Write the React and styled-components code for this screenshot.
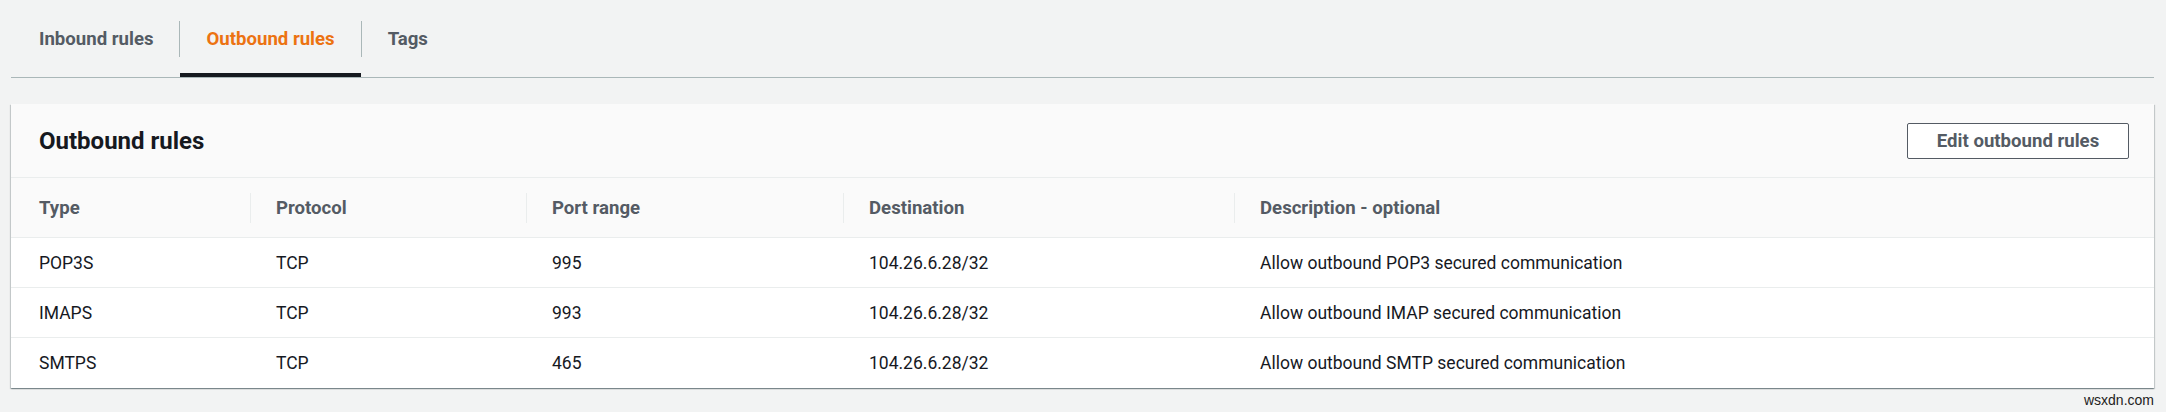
import styled, { createGlobalStyle } from "styled-components";

const GlobalStyle = createGlobalStyle`
  html, body {
    margin: 0;
    padding: 0;
    background-color: #f2f3f3;
  }
  body {
    font-family: Roboto, "Liberation Sans", sans-serif;
    color: #16191f;
  }
`;

const Page = styled.div`
  width: 2166px;
  height: 412px;
  padding: 0 12px 0 11px;
  box-sizing: border-box;
  display: flex;
  flex-direction: column;
`;

const TabBar = styled.div`
  display: flex;
  align-items: center;
  height: 77px;
  padding-left: 2px;
  border-bottom: 1px solid #aab7b8;
`;

const Tab = styled.div`
  position: relative;
  height: 100%;
  display: flex;
  align-items: center;
  padding: 0 26px;
  font-size: 18.6px;
  font-weight: 700;
  color: ${(props) => (props.active ? "#ec7211" : "#545b64")};

  &::after {
    content: "";
    display: ${(props) => (props.active ? "block" : "none")};
    position: absolute;
    left: 0;
    right: 0;
    bottom: 0;
    height: 4px;
    background-color: #16191f;
  }
`;

const TabDivider = styled.span`
  width: 1px;
  height: 36px;
  background-color: #aab7b8;
`;

const Card = styled.div`
  margin-top: 26px;
  background-color: #ffffff;
  box-shadow: 0 1px 1px 0 rgba(0, 28, 36, 0.3),
    1px 1px 1px 0 rgba(0, 28, 36, 0.15),
    -1px 1px 1px 0 rgba(0, 28, 36, 0.15);
`;

const CardHeader = styled.div`
  height: 73px;
  display: flex;
  align-items: center;
  justify-content: space-between;
  padding: 0 25px 0 28px;
  background-color: #fafafa;
  border-bottom: 1px solid #eaeded;
`;

const CardTitle = styled.h2`
  margin: 0;
  font-size: 24px;
  font-weight: 700;
  color: #16191f;
`;

const Button = styled.button`
  width: 222px;
  height: 36px;
  border: 1px solid #545b64;
  border-radius: 2px;
  background-color: #ffffff;
  font-family: Roboto, "Liberation Sans", sans-serif;
  font-size: 18.6px;
  font-weight: 700;
  color: #545b64;
  cursor: pointer;
`;

const Row = styled.div`
  display: grid;
  grid-template-columns: 239px 276px 317px 391px 1fr;
  height: ${(props) => (props.head ? "60px" : "50px")};
  background-color: ${(props) => (props.head ? "#fafafa" : "#ffffff")};
  border-bottom: ${(props) => (props.last ? "none" : "1px solid #eaeded")};
  box-sizing: border-box;
`;

const Cell = styled.div`
  position: relative;
  display: flex;
  align-items: center;
  padding-left: ${(props) => (props.first ? "28px" : "26px")};
  font-size: ${(props) => (props.head ? "18.6px" : "17.5px")};
  font-weight: ${(props) => (props.head ? 700 : 400)};
  color: ${(props) => (props.head ? "#545b64" : "#16191f")};
  white-space: nowrap;

  &::before {
    content: "";
    display: ${(props) => (props.head && !props.first ? "block" : "none")};
    position: absolute;
    left: 0;
    top: 15px;
    height: 30px;
    width: 1px;
    background-color: #eaeded;
  }
`;

const Footer = styled.div`
  flex: 1;
  display: flex;
  align-items: center;
  justify-content: flex-end;
  font-family: "Liberation Sans", Arial, sans-serif;
  font-size: 14px;
  color: #222222;
`;

const columns = ["Type", "Protocol", "Port range", "Destination", "Description - optional"];

const rules = [
  ["POP3S", "TCP", "995", "104.26.6.28/32", "Allow outbound POP3 secured communication"],
  ["IMAPS", "TCP", "993", "104.26.6.28/32", "Allow outbound IMAP secured communication"],
  ["SMTPS", "TCP", "465", "104.26.6.28/32", "Allow outbound SMTP secured communication"],
];

const App = () => {
  return (
    <>
      <GlobalStyle />
      <Page>
        <TabBar>
          <Tab>Inbound rules</Tab>
          <TabDivider />
          <Tab active>Outbound rules</Tab>
          <TabDivider />
          <Tab>Tags</Tab>
        </TabBar>
        <Card>
          <CardHeader>
            <CardTitle>Outbound rules</CardTitle>
            <Button>Edit outbound rules</Button>
          </CardHeader>
          <Row head>
            {columns.map((col, i) => (
              <Cell head first={i === 0} key={col}>
                {col}
              </Cell>
            ))}
          </Row>
          {rules.map((rule, r) => (
            <Row key={rule[0]} last={r === rules.length - 1}>
              {rule.map((value, i) => (
                <Cell first={i === 0} key={i}>
                  {value}
                </Cell>
              ))}
            </Row>
          ))}
        </Card>
        <Footer>wsxdn.com</Footer>
      </Page>
    </>
  );
};

export default App;
